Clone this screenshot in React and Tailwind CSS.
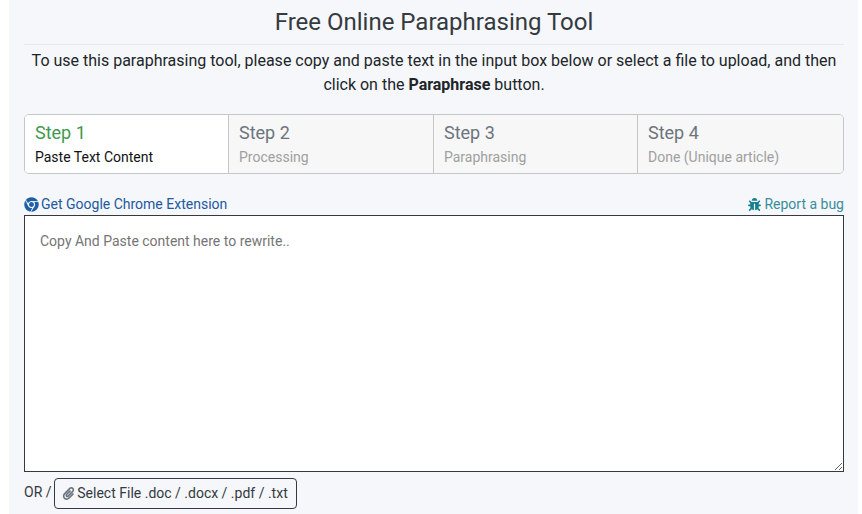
import { FaChrome, FaBug, FaPaperclip } from "react-icons/fa";

const STEPS = [
  { title: "Step 1", label: "Paste Text Content", active: true },
  { title: "Step 2", label: "Processing" },
  { title: "Step 3", label: "Paraphrasing" },
  { title: "Step 4", label: "Done (Unique article)" },
];

export default function App() {
  return (
    <div className="h-[514px] overflow-hidden bg-white pl-[9px] pr-[4px] font-['Roboto',sans-serif] text-[#212529]">
      <div className="h-full bg-[#f5f7fa] pl-[15px] pr-[14px]">
        <h1 className="h-[45px] border-b border-[#e6e8ea] pt-[6px] text-center text-[24px] leading-[32px] text-[#343a40]">
          Free Online Paraphrasing Tool
        </h1>
        <p className="mt-[4px] text-center text-[16px] leading-[24px]">
          To use this paraphrasing tool, please copy and paste text in the input box below or select a file to upload, and then click on the <b className="font-bold">Paraphrase</b> button.
        </p>

        <div className="mt-[17px] grid h-[60px] grid-cols-[204px_205px_204px_1fr] overflow-hidden rounded-[5px] border border-[#c6c6c6]">
          {STEPS.map((step) => (
            <div
              key={step.title}
              className={`border-r border-[#c6c6c6] pl-[10px] pt-[4px] last:border-r-0 ${step.active ? "bg-white" : "bg-[#f7f7f7]"}`}
            >
              <div className={`text-[18px] leading-[28px] ${step.active ? "text-[#3f9a4f]" : "text-[#6c757d]"}`}>{step.title}</div>
              <div className={`text-[14px] leading-[21px] ${step.active ? "text-[#111111]" : "text-[#a0a0a0]"}`}>{step.label}</div>
            </div>
          ))}
        </div>

        <div className="mt-[20px] flex h-[21px] items-center justify-between text-[14px]">
          <a className="flex items-center gap-[2px] text-[#23599f]">
            <FaChrome className="h-[15px] w-[15px] text-[#1f5fa8]" />
            Get Google Chrome Extension
          </a>
          <a className="flex items-center gap-[3px] text-[#3a8d9c]">
            <FaBug className="h-[13px] w-[13px] text-[#17808f]" />
            Report a bug
          </a>
        </div>

        <textarea
          className="block h-[257px] w-full resize-y border border-[#343a40] bg-white px-[15px] py-[15px] text-[14px] leading-[21px] outline-none placeholder:text-[#757575]"
          placeholder="Copy And Paste content here to rewrite.."
        />

        <div className="mt-[6px] flex items-start gap-[2px] text-[14px] text-[#343a40]">
          <span className="leading-[28px]">OR /</span>
          <button className="flex h-[31px] w-[243px] items-center justify-center gap-[2px] rounded-[4px] border border-[#343a40] text-[14px] text-[#343a40]">
            <FaPaperclip className="h-[13px] w-[13px] text-[#6c757d]" />
            Select File .doc / .docx / .pdf / .txt
          </button>
        </div>
      </div>
    </div>
  );
}
